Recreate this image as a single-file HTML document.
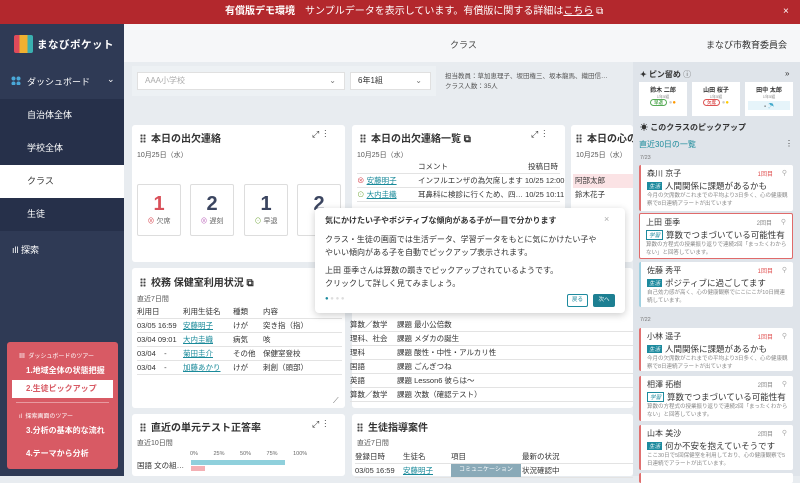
<!DOCTYPE html>
<html><head><meta charset="utf-8">
<style>
*{margin:0;padding:0;box-sizing:border-box}
body{width:800px;height:476px;overflow:hidden;position:relative;background:#e8ecf0;font-family:"Liberation Sans","Noto Sans CJK JP",sans-serif;color:#333;font-size:8px}
.a{position:absolute;white-space:nowrap}
.banner{left:0;top:0;width:800px;height:24px;background:#b3282d;color:#fff;font-size:10px;line-height:24px}
.side{left:0;top:24px;width:124px;height:452px;background:#2f3a55}
.sub{left:0;width:124px;height:33px;background:#26304a;color:#fff;font-size:9px;line-height:33px;padding-left:27px}
.hdr{left:124px;top:24px;width:676px;height:38px;background:#f6f7f9}
.card{background:#fff;border-radius:3px}
.t{font-size:10px;font-weight:bold;color:#333}
.grip{display:inline-block;width:6px;height:9px;background:radial-gradient(circle,#444 1px,transparent 1.2px) 0 0/3px 3px;margin-right:5px;vertical-align:-1px}
.d{font-size:7px;color:#555}
.row{border-bottom:1px solid #e3e3e3;height:14px;line-height:13px;font-size:7.5px}
.lnk{color:#1a8a9a;text-decoration:underline}
.box{border:1px solid #ddd;border-radius:2px;width:44px;height:52px;text-align:center}
.box b{display:block;font-size:20px;margin-top:8px;color:#3b4560}
.box span{font-size:7px;color:#666}
.pc{background:#fff;border-radius:2px;left:639px;width:154px;border-left:2px solid #e07070}
.pc .n{position:absolute;left:6px;top:3px;font-size:8px}
.pc .c{position:absolute;right:20px;top:4px;font-size:6px;color:#e05050}
.pc .h{position:absolute;left:6px;top:15px;font-size:8.5px}
.tag{display:inline-block;background:#1d8a9e;color:#fff;font-size:5.5px;padding:0 2px;margin-right:3px;vertical-align:1px}
.tag2{display:inline-block;border:1px solid #1d8a9e;color:#1d8a9e;font-size:5.5px;padding:0 2px;margin-right:3px;vertical-align:1px}
.pc .s{position:absolute;left:6px;top:27px;font-size:5.5px;color:#888;line-height:8px;white-space:normal;width:142px}
.pin{position:absolute;right:6px;top:4px;font-size:7px;color:#aaa}
</style></head><body>
<div class="a banner"><span style="position:absolute;left:225px;font-weight:bold">有償版デモ環境</span><span style="position:absolute;left:305px">サンプルデータを表示しています。有償版に関する詳細は<u>こちら</u> ⧉</span><span style="position:absolute;left:783px">×</span></div>

<div class="a side"></div>
<div class="a" style="left:14px;top:35px;width:19px;height:18px;background:linear-gradient(90deg,#e04a5a 0 30%,#f0b030 30% 70%,#3ab0b0 70%);border-radius:2px"></div>
<div class="a" style="left:37px;top:37px;color:#fff;font-size:10.5px;font-weight:bold;letter-spacing:.5px">まなびポケット</div>
<div class="a" style="left:11px;top:76px;width:10px;height:9px;background:radial-gradient(circle,#4aa8d8 2px,transparent 2px) 0 0/5px 5px"></div>
<div class="a" style="left:27px;top:75px;color:#fff;font-size:9px">ダッシュボード</div>
<div class="a" style="left:107px;top:74px;color:#fff;font-size:9px">⌄</div>
<div class="a sub" style="top:99px">自治体全体</div>
<div class="a sub" style="top:132px">学校全体</div>
<div class="a sub" style="top:165px;background:#fff;color:#333">クラス</div>
<div class="a sub" style="top:198px">生徒</div>
<div class="a" style="left:12px;top:243px;color:#fff;font-size:9px">ıll 探索</div>
<div class="a" style="left:7px;top:342px;width:111px;height:127px;background:#d85a64;border-radius:3px"></div>
<div class="a" style="left:19px;top:351px;color:#fff;font-size:6px">▦ &nbsp;ダッシュボードのツアー</div>
<div class="a" style="left:26px;top:365px;color:#fff;font-size:8px;font-weight:bold">1.地域全体の状態把握</div>
<div class="a" style="left:12px;top:380px;width:101px;height:18px;background:#fff"></div>
<div class="a" style="left:26px;top:383px;color:#d85a64;font-size:8px;font-weight:bold">2.生徒ピックアップ</div>
<div class="a" style="left:16px;top:402px;width:93px;height:1px;background:#e89aa0"></div>
<div class="a" style="left:19px;top:411px;color:#fff;font-size:6px">ıl &nbsp;探索画面のツアー</div>
<div class="a" style="left:26px;top:425px;color:#fff;font-size:8px;font-weight:bold">3.分析の基本的な流れ</div>
<div class="a" style="left:26px;top:448px;color:#fff;font-size:8px;font-weight:bold">4.テーマから分析</div>

<div class="a hdr"></div>
<div class="a" style="left:450px;top:38px;font-size:9px;color:#444">クラス</div>
<div class="a" style="left:706px;top:38px;font-size:9px;color:#333">まなび市教育委員会</div>

<div class="a" style="left:132px;top:66px;width:304px;height:30px;background:#edf1f4"></div>
<div class="a" style="left:137px;top:72px;width:208px;height:18px;background:#fff;border:1px solid #e0e0e0;color:#aaa;font-size:8px;line-height:16px;padding-left:7px">AAA小学校<span style="position:absolute;right:8px;color:#777">⌄</span></div>
<div class="a" style="left:350px;top:72px;width:81px;height:18px;background:#fff;border:1px solid #e0e0e0;font-size:8px;line-height:16px;padding-left:7px">6年1組<span style="position:absolute;right:8px;color:#777">⌄</span></div>
<div class="a" style="left:445px;top:72px;font-size:6.5px;color:#555;line-height:10px">担当教員：草加恵理子、坂田権三、坂本龍馬、織田信…<br>クラス人数：35人</div>

<!-- row1 -->
<div class="a card" style="left:132px;top:125px;width:213px;height:137px"></div>
<div class="a t" style="left:140px;top:130px"><i class="grip"></i>本日の出欠連絡</div>
<div class="a" style="left:312px;top:129px;font-size:9px">⤢ &nbsp;⋮</div>
<div class="a d" style="left:137px;top:150px">10月25日（水）</div>
<div class="a box" style="left:137px;top:184px"><b style="color:#d9505a">1</b><span><font color="#d9505a">⊗</font> 欠席</span></div>
<div class="a box" style="left:190px;top:184px"><b>2</b><span><font color="#c070c0">⊗</font> 遅刻</span></div>
<div class="a box" style="left:244px;top:184px"><b>1</b><span><font color="#80b050">⊙</font> 早退</span></div>
<div class="a box" style="left:297px;top:184px"><b>2</b><span>⊘</span></div>

<div class="a card" style="left:352px;top:125px;width:213px;height:137px"></div>
<div class="a t" style="left:360px;top:130px"><i class="grip"></i>本日の出欠連絡一覧 ⧉</div>
<div class="a" style="left:531px;top:129px;font-size:9px">⤢ &nbsp;⋮</div>
<div class="a d" style="left:357px;top:150px">10月25日（水）</div>
<div class="a" style="left:357px;top:160px;width:203px">
<div class="row" style="position:relative"><span style="position:absolute;left:61px">コメント</span><span style="position:absolute;left:171px">投稿日時</span></div>
<div class="row" style="position:relative"><span style="color:#d9505a">⊗</span> <span class="lnk">安藤明子</span><span style="position:absolute;left:61px">インフルエンザの為欠席します 10/25 12:00</span></div>
<div class="row" style="position:relative"><span style="color:#80b050">⊙</span> <span class="lnk">大内圭織</span><span style="position:absolute;left:61px">耳鼻科に検診に行くため、四… 10/25 10:11</span></div>
</div>

<div class="a card" style="left:571px;top:125px;width:62px;height:137px"></div>
<div class="a t" style="left:576px;top:130px"><i class="grip"></i>本日の心の</div>
<div class="a d" style="left:576px;top:150px">10月25日（水）</div>
<div class="a" style="left:573px;top:174px;width:60px;height:14px;background:#fbe3e5;font-size:7.5px;line-height:14px;padding-left:2px">阿部太郎</div>
<div class="a" style="left:575px;top:189px;font-size:7.5px">鈴木花子</div>

<!-- row2 -->
<div class="a card" style="left:132px;top:268px;width:213px;height:140px"></div>
<div class="a t" style="left:140px;top:274px"><i class="grip"></i>校務 保健室利用状況 ⧉</div>
<div class="a d" style="left:137px;top:294px">直近7日間</div>
<div class="a" style="left:137px;top:305px;width:205px;font-size:7.5px">
<div class="row" style="position:relative">利用日<span style="position:absolute;left:46px">利用生徒名</span><span style="position:absolute;left:96px">種類</span><span style="position:absolute;left:126px">内容</span></div>
<div class="row" style="position:relative">03/05 16:59<span class="lnk" style="position:absolute;left:46px">安藤明子</span><span style="position:absolute;left:96px">けが</span><span style="position:absolute;left:126px">突き指（指）</span></div>
<div class="row" style="position:relative">03/04 09:01<span class="lnk" style="position:absolute;left:46px">大内圭織</span><span style="position:absolute;left:96px">病気</span><span style="position:absolute;left:126px">咳</span></div>
<div class="row" style="position:relative">03/04 &nbsp;&nbsp;&nbsp;-<span class="lnk" style="position:absolute;left:46px">菊田圭介</span><span style="position:absolute;left:96px">その他</span><span style="position:absolute;left:126px">保健室登校</span></div>
<div class="row" style="position:relative">03/04 &nbsp;&nbsp;&nbsp;-<span class="lnk" style="position:absolute;left:46px">加藤あかり</span><span style="position:absolute;left:96px">けが</span><span style="position:absolute;left:126px">刺創（頭部）</span></div>
</div>
<div class="a" style="left:333px;top:396px;font-size:8px;color:#666">⟋</div>

<div class="a card" style="left:352px;top:268px;width:281px;height:140px"></div>
<div class="a" style="left:350px;top:318px;width:283px;font-size:7.5px">
<div class="row" style="position:relative">算数／数学<span style="position:absolute;left:47px">課題 最小公倍数</span></div>
<div class="row" style="position:relative">理科、社会<span style="position:absolute;left:47px">課題 メダカの誕生</span></div>
<div class="row" style="position:relative">理科<span style="position:absolute;left:47px">課題 酸性・中性・アルカリ性</span></div>
<div class="row" style="position:relative">国語<span style="position:absolute;left:47px">課題 ごんぎつね</span></div>
<div class="row" style="position:relative">英語<span style="position:absolute;left:47px">課題 Lesson6 彼らは〜</span></div>
<div class="row" style="position:relative">算数／数学<span style="position:absolute;left:47px">課題 次数（確認テスト）</span></div>
</div>

<!-- row3 -->
<div class="a card" style="left:132px;top:414px;width:213px;height:62px"></div>
<div class="a t" style="left:140px;top:419px"><i class="grip"></i>直近の単元テスト正答率</div>
<div class="a" style="left:312px;top:419px;font-size:9px">⤢ &nbsp;⋮</div>
<div class="a d" style="left:137px;top:438px">直近10日間</div>
<div class="a" style="left:190px;top:451px;font-size:5.5px;color:#666;word-spacing:14px">0% 25% 50% 75% 100%</div>
<div class="a" style="left:137px;top:460px;font-size:7.5px">国語 文の組…</div>
<div class="a" style="left:191px;top:460px;width:94px;height:5px;background:#8fd0dc"></div>
<div class="a" style="left:191px;top:466px;width:14px;height:5px;background:#f4b0b4"></div>

<div class="a card" style="left:352px;top:414px;width:281px;height:62px"></div>
<div class="a t" style="left:357px;top:419px"><i class="grip"></i>生徒指導案件</div>
<div class="a d" style="left:357px;top:438px">直近7日間</div>
<div class="a" style="left:355px;top:450px;width:278px;font-size:7.5px">
<div class="row" style="position:relative">登録日時<span style="position:absolute;left:48px">生徒名</span><span style="position:absolute;left:96px">項目</span><span style="position:absolute;left:167px">最新の状況</span></div>
<div class="row" style="position:relative">03/05 16:59<span class="lnk" style="position:absolute;left:48px">安藤明子</span><span style="position:absolute;left:96px;background:#8aaab8;color:#fff;font-size:6px;padding:0 8px">コミュニケーション</span><span style="position:absolute;left:167px">状況確認中</span></div>
</div>

<!-- right panel -->
<div class="a" style="left:633px;top:62px;width:167px;height:414px;background:#dfe4ea"></div>
<div class="a" style="left:640px;top:69px;font-size:8px;font-weight:bold">✦ ピン留め <span style="font-weight:normal;color:#666">ⓘ</span></div>
<div class="a" style="left:785px;top:69px;font-size:8px">»</div>
<div class="a" style="left:639px;top:82px;width:48px;height:34px;background:#fff;text-align:center;font-size:6px;font-weight:bold;padding-top:3px">鈴木 二郎<br><span style="font-size:4px;font-weight:normal;color:#888">1年5組</span><br><span style="border:1px solid #5a5;color:#5a5;border-radius:5px;font-size:4.5px;padding:0 3px">早退</span> <font color="#ccc">●</font><font color="#f90">●</font></div>
<div class="a" style="left:692px;top:82px;width:48px;height:34px;background:#fff;text-align:center;font-size:6px;font-weight:bold;padding-top:3px">山田 桜子<br><span style="font-size:4px;font-weight:normal;color:#888">1年5組</span><br><span style="border:1px solid #d55;color:#d55;border-radius:5px;font-size:4.5px;padding:0 3px">欠席</span> <font color="#ccc">●</font><font color="#fc0">●</font></div>
<div class="a" style="left:745px;top:82px;width:48px;height:34px;background:#fff;text-align:center;font-size:6px;font-weight:bold;padding-top:3px">田中 太郎<br><span style="font-size:4px;font-weight:normal;color:#888">1年5組</span><div style="background:#e6f4fa;margin:1px 3px;font-size:6px">- <font color="#4ac">☂</font></div></div>
<div class="a" style="left:640px;top:122px;font-size:8px;font-weight:bold">☀ このクラスのピックアップ</div>
<div class="a" style="left:639px;top:139px;font-size:8px;color:#1a8a9a">直近30日の一覧</div>
<div class="a" style="left:785px;top:139px;font-size:8px">⋮</div>
<div class="a" style="left:640px;top:155px;font-size:5.5px;color:#777">7/23</div>

<div class="a pc" style="top:165px;height:46px"><span class="n">森川 京子</span><span class="c">1回目</span><span class="pin">⚲</span><span class="h"><i class="tag">生活</i>人間関係に課題があるかも</span><span class="s">今月の欠席数がこれまでの平均より3日多く、心の健康観察で8日連続アラートが出ています</span></div>
<div class="a pc" style="top:213px;height:46px;border:1.5px solid #e06a6a"><span class="n">上田 亜季</span><span class="c" style="color:#888">2回目</span><span class="pin">⚲</span><span class="h"><i class="tag2">学習</i>算数でつまづいている可能性有</span><span class="s">算数の方程式の授業振り返りで連続2回「まったくわからない」と回答しています。</span></div>
<div class="a pc" style="top:262px;height:45px;border-left-color:#9fd0e0"><span class="n">佐藤 秀平</span><span class="c">1回目</span><span class="pin">⚲</span><span class="h"><i class="tag">生活</i>ポジティブに過ごしてます</span><span class="s">自己効力感が高く、心の健康観察でにこにこが10日間連続しています。</span></div>
<div class="a" style="left:640px;top:317px;font-size:5.5px;color:#777">7/22</div>
<div class="a pc" style="top:328px;height:43px"><span class="n">小林 遥子</span><span class="c">1回目</span><span class="pin">⚲</span><span class="h"><i class="tag">生活</i>人間関係に課題があるかも</span><span class="s">今月の欠席数がこれまでの平均より3日多く、心の健康観察で8日連続アラートが出ています</span></div>
<div class="a pc" style="top:376px;height:45px"><span class="n">相澤 拓樹</span><span class="c" style="color:#888">2回目</span><span class="pin">⚲</span><span class="h"><i class="tag2">学習</i>算数でつまづいている可能性有</span><span class="s">算数の方程式の授業振り返りで連続2回「まったくわからない」と回答しています。</span></div>
<div class="a pc" style="top:425px;height:45px"><span class="n">山本 美沙</span><span class="c" style="color:#888">2回目</span><span class="pin">⚲</span><span class="h"><i class="tag">生活</i>何か不安を抱えていそうです</span><span class="s">ここ30日で5回保健室を利用しており、心の健康観察で5日連続でアラートが出ています。</span></div>
<div class="a pc" style="top:473px;height:10px"></div>

<!-- tooltip -->
<div class="a" style="left:315px;top:208px;width:310px;height:105px;background:#fff;border-radius:4px;box-shadow:0 2px 8px rgba(0,0,0,.2)"></div>
<div class="a" style="left:325px;top:215px;font-size:8px;font-weight:bold">気にかけたい子やポジティブな傾向がある子が一目で分かります</div>
<div class="a" style="left:604px;top:214px;font-size:9px;color:#aaa">×</div>
<div class="a" style="left:325px;top:233px;font-size:8px;line-height:13px;color:#333">クラス・生徒の画面では生活データ、学習データをもとに気にかけたい子や<br>やいい傾向がある子を自動でピックアップ表示されます。</div>
<div class="a" style="left:325px;top:264px;font-size:8px;line-height:13px;color:#333">上田 亜季さんは算数の躓きでピックアップされているようです。<br>クリックして詳しく見てみましょう。</div>
<div class="a" style="left:325px;top:296px;font-size:6px;color:#ddd"><font color="#1d8a9e">●</font> ● ● ●</div>
<div class="a" style="left:567px;top:294px;width:21px;height:13px;border:1px solid #1d8a9e;border-radius:2px;color:#1d8a9e;font-size:5.5px;text-align:center;line-height:11px">戻る</div>
<div class="a" style="left:593px;top:294px;width:22px;height:13px;background:#1d7f92;border-radius:2px;color:#fff;font-size:5.5px;text-align:center;line-height:13px">次へ</div>
</body></html>
